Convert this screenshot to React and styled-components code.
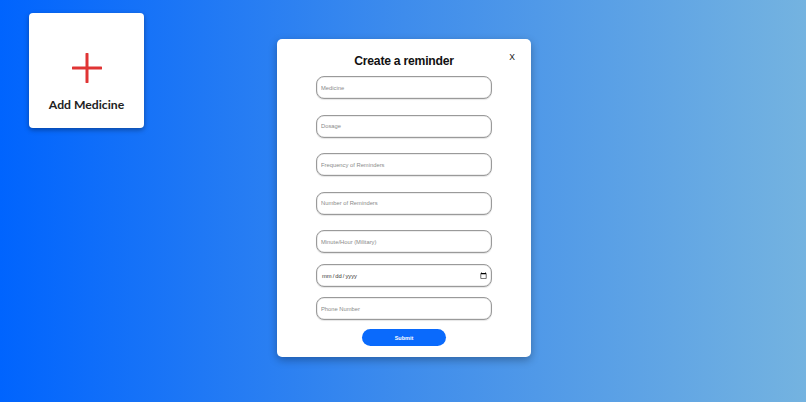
import React from "react";
import styled, { createGlobalStyle } from "styled-components";

const Global = createGlobalStyle`
  html, body { margin: 0; padding: 0; }
  body {
    width: 806px;
    height: 402px;
    overflow: hidden;
    background: linear-gradient(90deg, #0064fe 0%, #3e8cec 50%, #74b3e0 100%);
    font-family: "Liberation Sans", Arial, sans-serif;
  }
`;

const Page = styled.div`
  position: relative;
  width: 806px;
  height: 402px;
  box-sizing: border-box;
  padding: 13px 0 0 29px;
`;

const AddCard = styled.button`
  width: 115px;
  height: 115px;
  box-sizing: border-box;
  background: #fff;
  border: none;
  border-radius: 4px;
  box-shadow: 0 2px 5px rgba(0, 0, 0, 0.35);
  display: flex;
  flex-direction: column;
  align-items: center;
  padding: 40px 0 0;
  gap: 14px;
  cursor: pointer;
`;

const CardLabel = styled.span`
  font-family: Lato, "Noto Sans", sans-serif;
  font-weight: 700;
  font-size: 12.2px;
  line-height: 15px;
  color: #222;
`;

const Modal = styled.div`
  position: absolute;
  left: 277px;
  top: 39px;
  width: 254px;
  height: 318px;
  box-sizing: border-box;
  background: #fff;
  border-radius: 5px;
  box-shadow: 0 3px 8px rgba(0, 0, 0, 0.3);
  display: flex;
  flex-direction: column;
  align-items: center;
  padding-top: 14px;
`;

const Close = styled.button`
  position: absolute;
  right: 16px;
  top: 13px;
  background: none;
  border: none;
  padding: 0;
  font-family: "Liberation Sans", Arial, sans-serif;
  font-weight: 400;
  font-size: 8.5px;
  color: #111;
  cursor: pointer;
`;

const Title = styled.h2`
  margin: 0 0 7px;
  font-family: "Liberation Sans", Arial, sans-serif;
  font-weight: 700;
  font-size: 12.2px;
  letter-spacing: -0.25px;
  line-height: 16px;
  color: #111;
`;

const Form = styled.form`
  display: flex;
  flex-direction: column;
  align-items: center;
  width: 176px;
`;

const Field = styled.input`
  width: 176px;
  height: 23px;
  box-sizing: border-box;
  border: 1px solid #9a9a9a;
  border-radius: 8px;
  box-shadow: inset 0 0 0 0.5px #dcdcdc, 0 1px 1px rgba(0,0,0,0.1);
  padding: 0 4px;
  margin-bottom: ${(p) => p.$gap}px;
  font-family: "Liberation Sans", Arial, sans-serif;
  font-size: 5.8px;
  color: #333;
  background: #fff;
  outline: none;
  &::placeholder { color: #8a8a8a; }
  &::-webkit-calendar-picker-indicator {
    width: 7px;
    height: 7px;
    padding: 0;
    margin: 0;
  }
  &::-webkit-datetime-edit { color: #333; }
`;

const Submit = styled.button`
  width: 84px;
  height: 17px;
  border: none;
  border-radius: 9px;
  background: #0a6afc;
  color: #fff;
  font-family: "Liberation Sans", Arial, sans-serif;
  font-weight: 700;
  font-size: 5.5px;
  cursor: pointer;
`;

function PlusIcon() {
  return (
    <svg width="30" height="30" viewBox="0 0 30 30">
      <path d="M15 1 V29 M1 15 H29" stroke="#e03434" strokeWidth="3" strokeLinecap="round" />
    </svg>
  );
}

export default function App() {
  const fields = [
    { ph: "Medicine", gap: 15.5 },
    { ph: "Dosage", gap: 15.5 },
    { ph: "Frequency of Reminders", gap: 15.5 },
    { ph: "Number of Reminders", gap: 15.5 },
    { ph: "Minute/Hour (Military)", gap: 11 },
  ];
  return (
    <>
      <Global />
      <Page>
        <AddCard type="button">
          <PlusIcon />
          <CardLabel>Add Medicine</CardLabel>
        </AddCard>
        <Modal>
          <Close type="button">X</Close>
          <Title>Create a reminder</Title>
          <Form onSubmit={(e) => e.preventDefault()}>
            {fields.map((f) => (
              <Field key={f.ph} type="text" placeholder={f.ph} $gap={f.gap} />
            ))}
            <Field type="date" $gap={10} />
            <Field type="tel" placeholder="Phone Number" $gap={9} />
            <Submit type="submit">Submit</Submit>
          </Form>
        </Modal>
      </Page>
    </>
  );
}
